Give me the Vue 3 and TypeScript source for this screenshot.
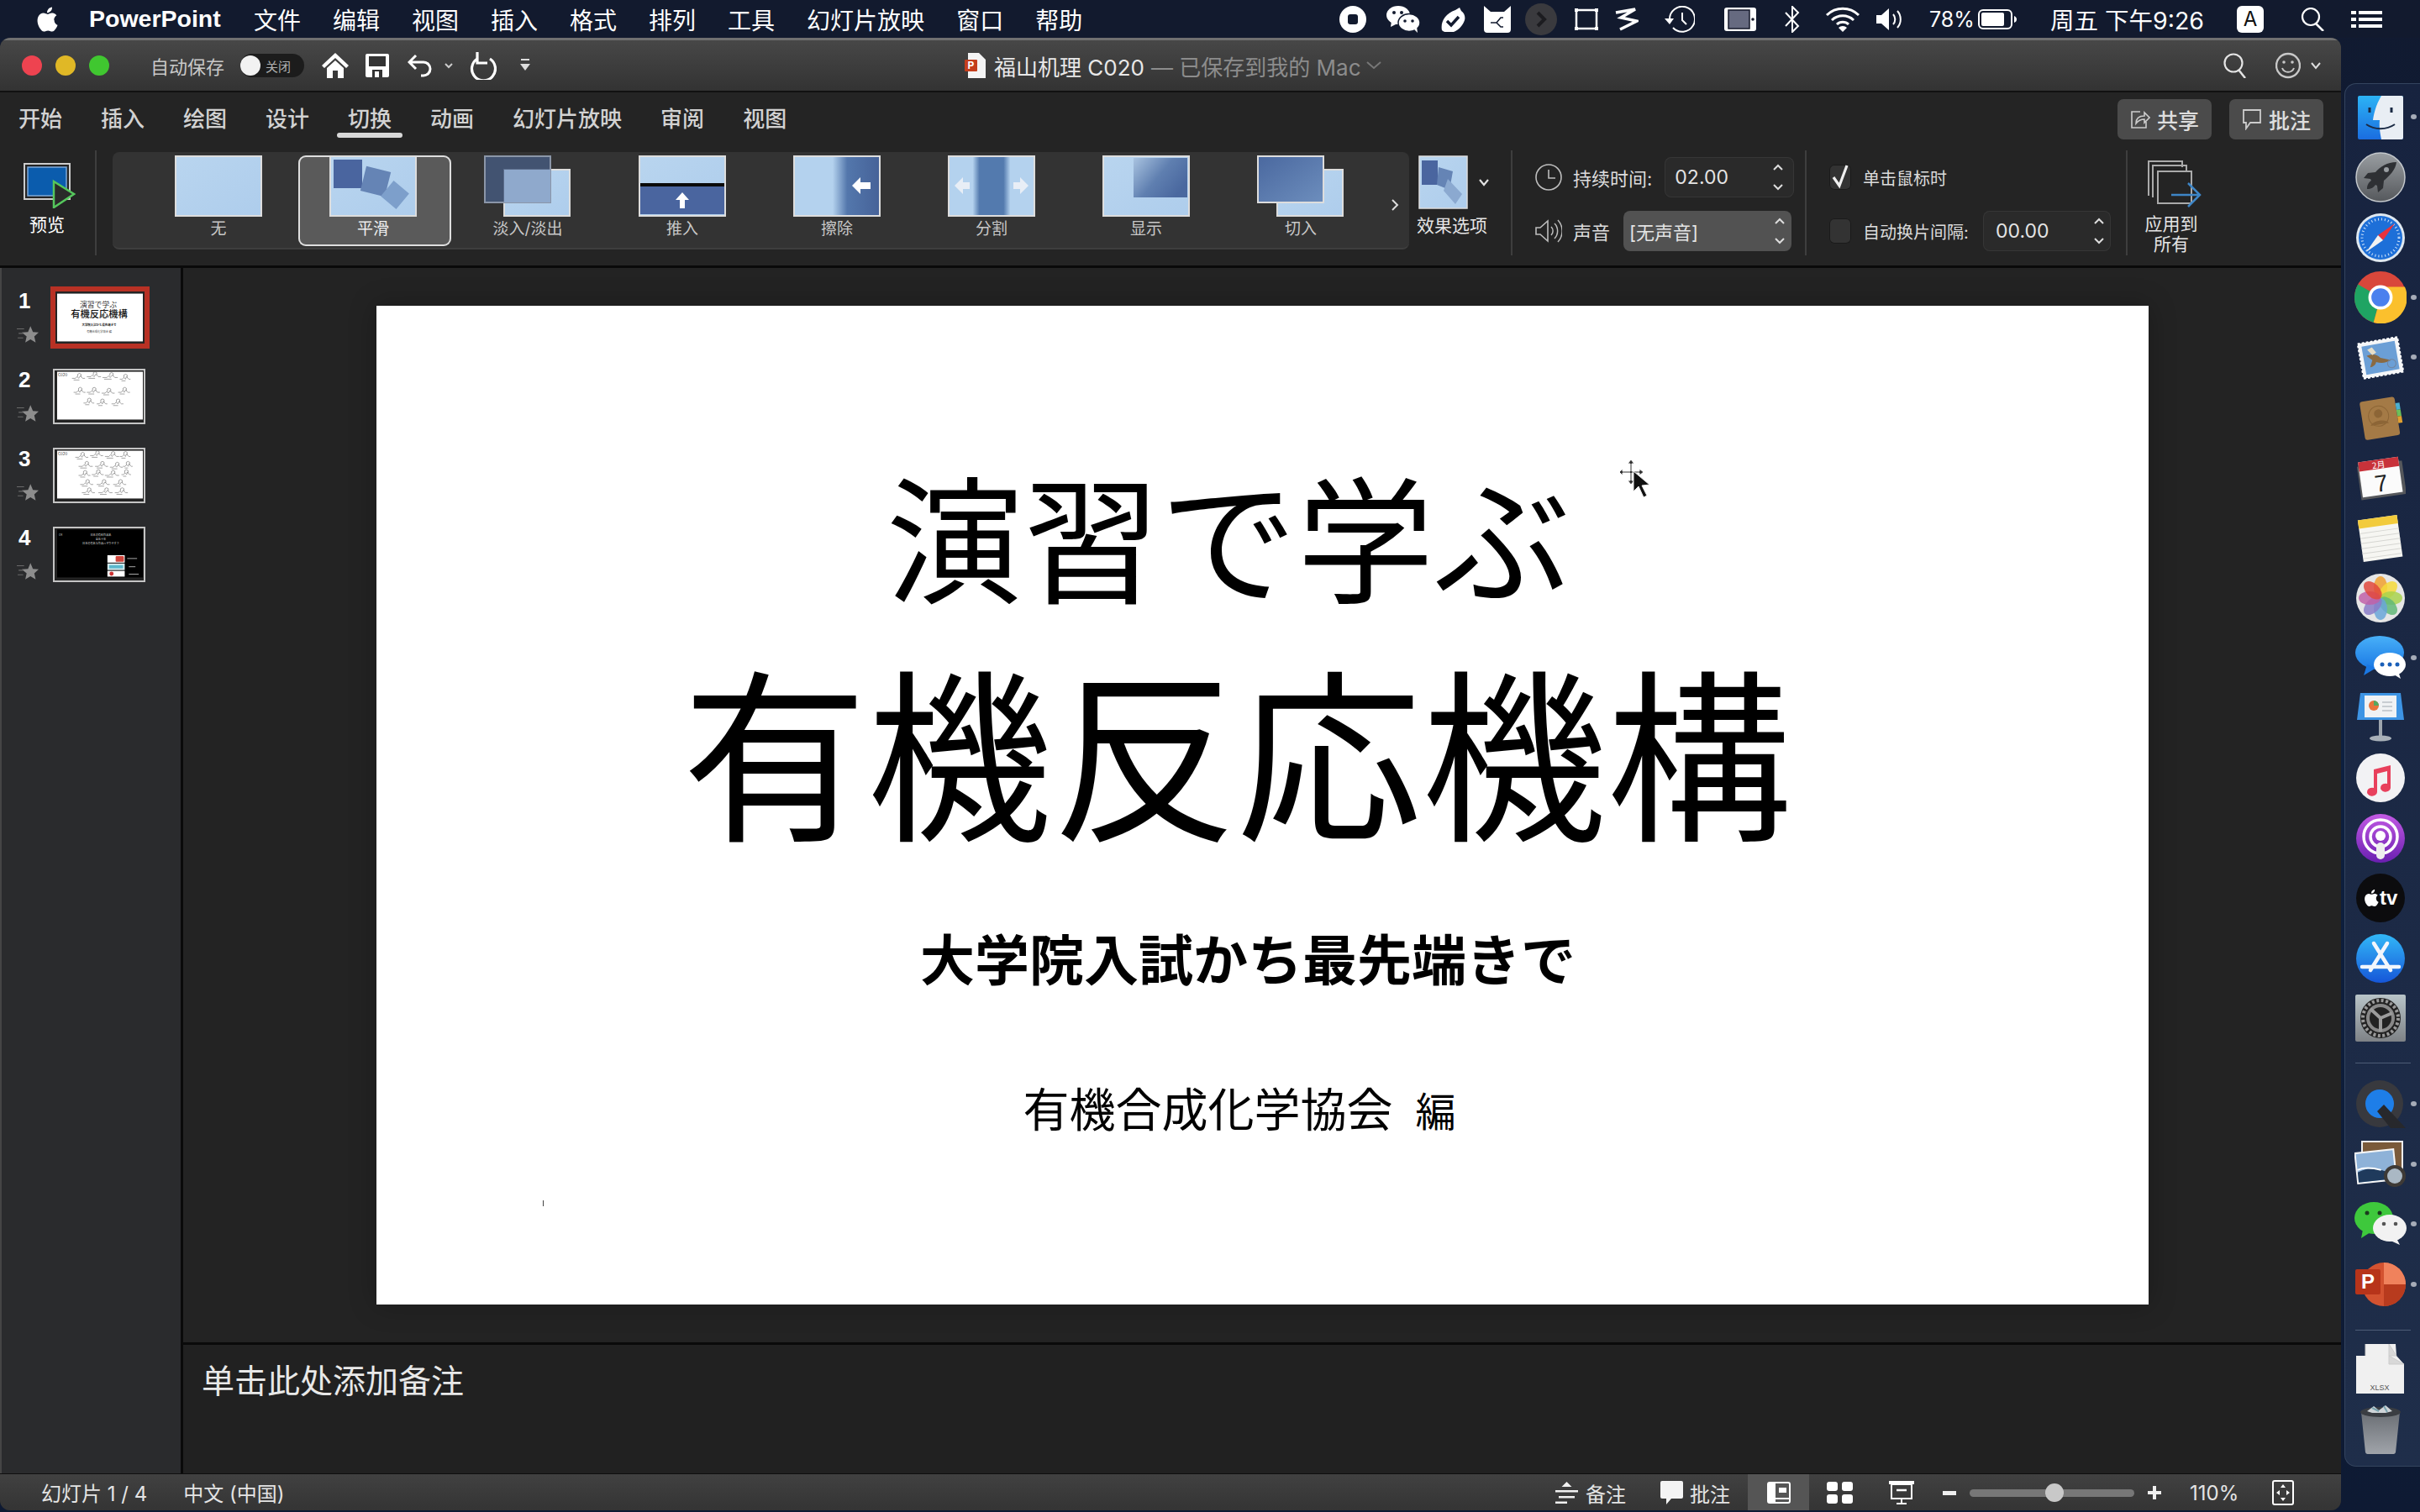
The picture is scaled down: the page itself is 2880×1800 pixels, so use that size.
<script setup lang="ts">
type Transition = { label: string; kind: string }

const menus = ['文件', '编辑', '视图', '插入', '格式', '排列', '工具', '幻灯片放映', '窗口', '帮助']
const tabs = ['开始', '插入', '绘图', '设计', '切换', '动画', '幻灯片放映', '审阅', '视图']

const transitions: Transition[] = [
  { label: '无', kind: 'none' },
  { label: '平滑', kind: 'morph' },
  { label: '淡入/淡出', kind: 'fade' },
  { label: '推入', kind: 'push' },
  { label: '擦除', kind: 'wipe' },
  { label: '分割', kind: 'split' },
  { label: '显示', kind: 'reveal' },
  { label: '切入', kind: 'cut' }
]

const slides = [1, 2, 3, 4]
const petals = ['#f0a030', '#f4d93a', '#a8d24e', '#62b878', '#6aa6d8', '#8a7cc8', '#c060a8', '#e0483c']

// little squiggles standing in for the chemistry drawings on the small slides
const scribble = (rows: number[][]) =>
  rows
    .map(([x, y, w]) => {
      const mid = x + w / 2
      return `M${x} ${y}h${w * 0.3}l2 -2l2 2L${mid + 3} ${y - 3}l3 3h${w * 0.2}M${mid} ${y - 2}v-3l2 -1l2 1v3M${x + 2} ${y + 2}h${w * 0.5}`
    })
    .join('')

const slide2 = scribble([
  [18, 8, 14], [36, 6, 16], [55, 7, 18], [76, 9, 10],
  [20, 25, 12], [36, 25, 14], [54, 26, 14], [74, 25, 12],
  [32, 38, 10], [48, 39, 10], [66, 39, 12]
])
const slide3 = scribble([
  [22, 8, 14], [40, 6, 14], [58, 7, 16], [76, 7, 10],
  [26, 19, 16], [46, 19, 14], [64, 20, 14], [80, 19, 8],
  [26, 30, 12], [42, 29, 12], [58, 30, 16], [78, 29, 8],
  [28, 41, 14], [48, 41, 14], [68, 41, 14],
  [30, 51, 14], [50, 51, 16], [70, 51, 14]
])
</script>

<template>
  <div class="screen">
    <header class="menubar">
      <div class="menu-left">
        <svg class="apple" width="30" height="32" viewBox="3 2 20 22"><path fill="#fff" d="M18.7 13.6c0-2.5 2-3.7 2.1-3.8-1.2-1.7-3-1.9-3.6-1.9-1.5-.2-3 .9-3.8.9-.8 0-2-.9-3.3-.9-1.7 0-3.3 1-4.1 2.5-1.8 3.1-.5 7.6 1.3 10.1.9 1.2 1.9 2.6 3.2 2.5 1.3-.1 1.8-.8 3.3-.8 1.5 0 2 .8 3.3.8 1.4 0 2.2-1.2 3.1-2.4 1-1.4 1.4-2.8 1.4-2.9-.1 0-2.7-1-2.7-4zM16.1 6.2c.7-.8 1.2-2 1-3.2-1 0-2.3.7-3 1.5-.6.7-1.2 1.9-1.1 3.1 1.2.1 2.4-.6 3.1-1.4z"/></svg>
        <span class="app-name">PowerPoint</span>
        <span v-for="m in menus" :key="m" class="menu-item">{{ m }}</span>
      </div>
      <div class="menu-status">
        <svg width="32" height="32" viewBox="0 0 32 32"><circle cx="16" cy="16" r="16" fill="#fff"/><rect x="10" y="10" width="12" height="12" rx="3" fill="#121a2e"/></svg>
        <svg width="40" height="32" viewBox="0 0 40 32"><ellipse cx="14" cy="11" rx="14" ry="11" fill="#fff"/><path d="M6 18l-1 7 8-4z" fill="#fff"/><circle cx="9" cy="8" r="2" fill="#121a2e"/><circle cx="18" cy="8" r="2" fill="#121a2e"/><ellipse cx="27" cy="20" rx="13" ry="10.5" fill="#fff" stroke="#121a2e" stroke-width="1.5"/><path d="M33 28l4 4-1-7z" fill="#fff"/><circle cx="22" cy="18" r="1.8" fill="#121a2e"/><circle cx="31" cy="18" r="1.8" fill="#121a2e"/></svg>
        <svg width="30" height="30" viewBox="0 0 30 30"><path d="M2 28C0 18 6 8 18 4l5-3 2 4c4 3 5 7 4 11-2 6-7 12-13 14-6 1-11 1-14-2z" fill="#fff"/><path d="M8 17l5 5 9-10" fill="none" stroke="#121a2e" stroke-width="3.5"/></svg>
        <svg width="32" height="32" viewBox="0 0 32 32"><path d="M0 0l8 7h16l8-7v28a4 4 0 0 1-4 4H4a4 4 0 0 1-4-4z" fill="#fff"/><path d="M8 20h7l5-6h3M15 20l5 5h3" fill="none" stroke="#121a2e" stroke-width="1.6"/></svg>
        <svg width="38" height="38" viewBox="0 0 38 38"><circle cx="19" cy="19" r="19" fill="#3a3a3e"/><path d="M15 11l8 8-8 8" fill="none" stroke="#1c1c20" stroke-width="4"/></svg>
        <svg width="28" height="26" viewBox="0 0 28 26"><rect x="2" y="2" width="24" height="22" fill="none" stroke="#fff" stroke-width="2.5"/><path d="M0 0h4v4H0zM24 0h4v4h-4zM0 22h4v4H0zM24 22h4v4h-4z" fill="#fff"/></svg>
        <svg width="28" height="28" viewBox="0 0 28 28"><path d="M1 6L24 2 7 12l19 4L6 26" fill="none" stroke="#fff" stroke-width="3.5"/></svg>
        <svg width="36" height="32" viewBox="0 0 36 32"><path d="M6 16a15 15 0 1 1 4 10" fill="none" stroke="#fff" stroke-width="2"/><path d="M0 15h11l-5 7z" fill="#fff"/><path d="M21 8v9l5 5" fill="none" stroke="#fff" stroke-width="2"/></svg>
        <svg width="38" height="28" viewBox="0 0 38 28"><rect width="38" height="28" rx="3" fill="#fff"/><rect x="5" y="3" width="25" height="22" fill="#666a80" stroke="#15192a" stroke-width="1.5"/><circle cx="34" cy="14" r="1.8" fill="#15192a"/></svg>
        <svg width="20" height="32" viewBox="0 0 20 32"><path d="M2 8l15 16-7 7V1l7 7L2 24" fill="none" stroke="#fff" stroke-width="2"/></svg>
        <svg width="42" height="30" viewBox="0 0 42 30"><path d="M2 10a27 27 0 0 1 38 0M8 16a19 19 0 0 1 26 0M14 21a10 10 0 0 1 14 0" fill="none" stroke="#fff" stroke-width="3"/><path d="M21 30l-5-5a7 7 0 0 1 10 0z" fill="#fff"/></svg>
        <svg width="34" height="26" viewBox="0 0 34 26"><path d="M0 8h6l9-8v26l-9-8H0z" fill="#fff"/><path d="M20 7a9 9 0 0 1 0 12M25 3a15 15 0 0 1 0 20" fill="none" stroke="#fff" stroke-width="2"/></svg>
        <span class="status-text battery-text">78%</span>
        <svg width="46" height="24" viewBox="0 0 46 24"><rect x="1" y="1" width="39" height="22" rx="5" fill="none" stroke="#fff" stroke-width="2"/><rect x="4" y="4" width="27" height="16" rx="2" fill="#fff"/><path d="M43 8c2 1 3 2 3 4s-1 3-3 4z" fill="#fff"/></svg>
        <span class="status-text clock">周五 下午9:26</span>
        <span class="input-badge">A</span>
        <svg width="30" height="28" viewBox="0 0 30 28"><circle cx="12" cy="11" r="10" fill="none" stroke="#fff" stroke-width="2.2"/><path d="M18 19l9 9" stroke="#fff" stroke-width="2.5"/></svg>
        <svg width="37" height="20" viewBox="0 0 37 20"><path d="M0 0h6v4H0zM9 0h28v4H9zM0 8h6v4H0zM9 8h28v4H9zM0 16h6v4H0zM9 16h28v4H9z" fill="#fff"/></svg>
      </div>
    </header>

    <div class="desk">
      <main class="window">
        <div class="titlebar">
          <div class="title-left">
            <i class="light red"></i><i class="light amber"></i><i class="light green"></i>
            <span class="autosave">自动保存</span>
            <span class="toggle"><b></b><em>关闭</em></span>
            <svg width="32" height="30" viewBox="0 0 32 30"><path d="M16 0L32 15l-3 3L16 6 3 18l-3-3z" fill="#fff"/><path d="M6 18L16 9l10 9v12h-7v-9h-6v9H6z" fill="#fff"/></svg>
            <svg width="28" height="28" viewBox="0 0 28 28"><path d="M2 0h24a2 2 0 0 1 2 2v24a2 2 0 0 1-2 2H2a2 2 0 0 1-2-2V2a2 2 0 0 1 2-2z" fill="#fff"/><rect x="4" y="3" width="20" height="12" fill="#333"/><rect x="8" y="19" width="12" height="9" fill="#333"/><rect x="11" y="21" width="5" height="7" fill="#fff"/></svg>
            <svg width="29" height="28" viewBox="0 0 29 28"><path d="M10 2L2 10l8 8M2 10h17a8 8 0 0 1 0 16h-3" fill="none" stroke="#fff" stroke-width="3"/></svg>
            <svg class="mini-caret" width="10" height="7" viewBox="0 0 10 7"><path d="M1 1l4 4 4-4" fill="none" stroke="#ccc" stroke-width="2"/></svg>
            <svg width="32" height="34" viewBox="0 0 32 34"><path d="M9 9a14 14 0 1 0 15 0" fill="none" stroke="#fff" stroke-width="3.2"/><path d="M9 1v13h12" fill="none" stroke="#fff" stroke-width="3.2"/></svg>
            <svg width="12" height="16" viewBox="0 0 12 16"><path d="M1 1h10" stroke="#ddd" stroke-width="2"/><path d="M0 6h12l-6 8z" fill="#ddd"/></svg>
          </div>
          <div class="doc-title">
            <svg width="26" height="30" viewBox="0 0 26 30"><path d="M4 0h13l8 8v22H4z" fill="#f4f4f4"/><rect y="8" width="15" height="14" rx="1" fill="#c43e1c"/><text x="7.5" y="19" class="doc-p">P</text></svg>
            <span class="doc-name">福山机理 C020</span>
            <span class="doc-state">— 已保存到我的 Mac</span>
            <svg width="18" height="10" viewBox="0 0 18 10"><path d="M1 1l8 7 8-7" fill="none" stroke="#777" stroke-width="2"/></svg>
          </div>
          <div class="title-right">
            <svg width="28" height="30" viewBox="0 0 28 30"><circle cx="12" cy="12" r="10.5" fill="none" stroke="#e4e4e4" stroke-width="2.2"/><path d="M18 20l8 10" stroke="#e4e4e4" stroke-width="2.5"/></svg>
            <svg width="30" height="32" viewBox="0 0 30 32"><circle cx="15" cy="16" r="14" fill="none" stroke="#c8c8c8" stroke-width="2.4"/><circle cx="10" cy="12" r="1.8" fill="#c8c8c8"/><circle cx="20" cy="12" r="1.8" fill="#c8c8c8"/><path d="M8 19a7.5 7.5 0 0 0 14 0" fill="none" stroke="#c8c8c8" stroke-width="2"/></svg>
            <svg width="12" height="9" viewBox="0 0 12 9"><path d="M1 1l5 6 5-6" fill="none" stroke="#ddd" stroke-width="2"/></svg>
          </div>
        </div>

        <section class="ribbon">
          <div class="tabs">
            <span v-for="t in tabs" :key="t" class="tab" :class="{ active: t === '切换' }">{{ t }}</span>
            <div class="tab-actions">
              <button class="pill">
                <svg width="24" height="24" viewBox="0 0 24 24"><path d="M12 3H2v19h17v-7" fill="none" stroke="#ccc" stroke-width="1.6"/><path d="M7 17c0-6 4-9 10-9V4l6 6-6 6v-4c-4 0-7 1-10 5z" fill="none" stroke="#ccc" stroke-width="1.6"/></svg>
                共享
              </button>
              <button class="pill">
                <svg width="24" height="26" viewBox="0 0 24 26"><path d="M2 2h20v15H10l-5 7v-7H2z" fill="none" stroke="#ccc" stroke-width="1.8"/></svg>
                批注
              </button>
            </div>
          </div>

          <div class="tools">
            <div class="preview">
              <svg width="62" height="54" viewBox="0 0 62 54">
                <rect x="1" y="1" width="54" height="42" fill="none" stroke="#ccc" stroke-width="2"/>
                <rect x="5" y="5" width="46" height="34" fill="#0b5cad" stroke="#7ea8d8" stroke-width="1.5"/>
                <path d="M36 22l24 15-24 16z" fill="#2a2a2a" stroke="#55c65c" stroke-width="2.5"/>
              </svg>
              <span>预览</span>
            </div>
            <i class="vsep"></i>

            <div class="gallery">
              <svg class="defs" width="0" height="0">
                <defs>
                  <linearGradient id="light" x1="0" y1="0" x2="1" y2="1"><stop offset="0" stop-color="#b9d5ef"/><stop offset="1" stop-color="#aecdec"/></linearGradient>
                  <linearGradient id="dark" x1="0" y1="0" x2="1" y2="1"><stop offset="0" stop-color="#4a689f"/><stop offset="1" stop-color="#6d8ebd"/></linearGradient>
                  <linearGradient id="wipe" x1="0" y1="0" x2="1" y2="0"><stop offset="0.45" stop-color="#b4d2ee"/><stop offset="0.62" stop-color="#5377ac"/><stop offset="1" stop-color="#466298"/></linearGradient>
                  <linearGradient id="band" x1="0" y1="0" x2="1" y2="0"><stop offset="0.28" stop-color="#b4d2ee"/><stop offset="0.36" stop-color="#537aae"/><stop offset="0.64" stop-color="#537aae"/><stop offset="0.72" stop-color="#b4d2ee"/></linearGradient>
                  <linearGradient id="reveal" x1="0" y1="0" x2="1" y2="0.6"><stop offset="0" stop-color="#a9c3e0"/><stop offset="0.55" stop-color="#5f7fb0"/><stop offset="1" stop-color="#4a689f"/></linearGradient>
                </defs>
              </svg>
              <div class="cells">
                <div v-for="t in transitions" :key="t.kind" class="cell" :class="{ selected: t.kind === 'morph' }">
                  <svg class="thumb" width="104" height="73" viewBox="0 0 104 73">
                    <template v-if="t.kind === 'fade'">
                      <rect x="24" y="17" width="78" height="55" fill="url(#light)" stroke="#ddd" stroke-width="2"/>
                      <rect x="1" y="1" width="78" height="55" fill="#45597c" fill-opacity=".85" stroke="#8b96a8" stroke-width="2"/>
                      <rect x="24" y="17" width="55" height="39" fill="#8fa9cc"/>
                    </template>
                    <template v-else-if="t.kind === 'cut'">
                      <rect x="24" y="17" width="78" height="55" fill="url(#light)" stroke="#ddd" stroke-width="2"/>
                      <rect x="1" y="1" width="78" height="55" fill="url(#dark)" stroke="#ddd" stroke-width="2"/>
                    </template>
                    <template v-else>
                      <rect x="1" y="1" width="102" height="71" :fill="t.kind === 'wipe' ? 'url(#wipe)' : t.kind === 'split' ? 'url(#band)' : 'url(#light)'" stroke="#ddd" stroke-width="2"/>
                    </template>
                    <template v-if="t.kind === 'morph'">
                      <rect x="5" y="5" width="34" height="34" fill="#4a659f"/>
                      <rect x="40" y="16" width="30" height="30" fill="#6584b5" transform="rotate(14 55 31)"/>
                      <rect x="66" y="35" width="24" height="24" fill="#7d9fcb" transform="rotate(40 78 47)"/>
                    </template>
                    <template v-if="t.kind === 'push'">
                      <rect x="2" y="36" width="100" height="34" fill="#4a659f"/>
                      <rect x="2" y="33" width="100" height="4" fill="#0a0a0a"/>
                      <path d="M52 44l8 9h-5v10h-6V53h-5z" fill="#fff"/>
                    </template>
                    <path v-if="t.kind === 'wipe'" d="M70 36l10-10v6h12v8H80v6z" fill="#fff"/>
                    <template v-if="t.kind === 'split'">
                      <path d="M8 36l10-10v6h8v8h-8v6z" fill="#e8eef6"/>
                      <path d="M96 36L86 26v6h-8v8h8v6z" fill="#e8eef6"/>
                    </template>
                    <rect v-if="t.kind === 'reveal'" x="37" y="3" width="64" height="47" fill="url(#reveal)"/>
                  </svg>
                  <span class="cell-label">{{ t.label }}</span>
                </div>
              </div>
              <svg class="more" width="9" height="14" viewBox="0 0 9 14"><path d="M1 1l6 6-6 6" fill="none" stroke="#ddd" stroke-width="2"/></svg>
            </div>

            <div class="effects">
              <div class="effects-top">
                <svg width="59" height="64" viewBox="0 0 59 64">
                  <rect x="1" y="1" width="57" height="62" fill="url(#light)" stroke="#ddd" stroke-width="1.5"/>
                  <rect x="4" y="6" width="19" height="29" fill="#4a659f"/>
                  <path d="M24 14l17 5-4 22-15-6z" fill="#6584b5"/>
                  <path d="M35 28l17 18-8 12-14-16z" fill="#8ba9d0"/>
                </svg>
                <svg width="12" height="9" viewBox="0 0 12 9"><path d="M1 1l5 6 5-6" fill="none" stroke="#e0e0e0" stroke-width="2.2"/></svg>
              </div>
              <span>效果选项</span>
            </div>
            <i class="vsep"></i>

            <div class="timing">
              <div class="form-row">
                <svg width="32" height="32" viewBox="0 0 32 32"><circle cx="16" cy="16" r="15" fill="none" stroke="#bdbdbd" stroke-width="1.6"/><path d="M16 7v10h8" fill="none" stroke="#bdbdbd" stroke-width="1.6"/></svg>
                <span class="form-label">持续时间:</span>
                <div class="spin duration"><span>02.00</span>
                  <svg width="14" height="34" viewBox="0 0 14 34"><path d="M2 8l5-5 5 5M2 26l5 5 5-5" fill="none" stroke="#ddd" stroke-width="2"/></svg>
                </div>
              </div>
              <div class="form-row">
                <svg width="32" height="30" viewBox="0 0 32 30"><path d="M1 11h5l9-8v24l-9-8H1z" fill="none" stroke="#bdbdbd" stroke-width="1.6"/><path d="M19 10a7 7 0 0 1 0 10M23 6a13 13 0 0 1 0 18M27 2a19 19 0 0 1 0 26" fill="none" stroke="#bdbdbd" stroke-width="1.5"/></svg>
                <span class="form-label">声音</span>
                <div class="spin sound"><span>[无声音]</span>
                  <svg width="14" height="34" viewBox="0 0 14 34"><path d="M2 8l5-5 5 5M2 26l5 5 5-5" fill="none" stroke="#ddd" stroke-width="2"/></svg>
                </div>
              </div>
            </div>
            <i class="vsep"></i>

            <div class="advance">
              <div class="form-row">
                <span class="check">
                  <svg width="26" height="30" viewBox="0 0 26 30"><path d="M5 15l7 10 9-24" fill="none" stroke="#f0f0f0" stroke-width="3.2"/></svg>
                </span>
                <span class="check-label">单击鼠标时</span>
              </div>
              <div class="form-row">
                <span class="check"></span>
                <span class="check-label wide">自动换片间隔:</span>
                <div class="spin auto"><span>00.00</span>
                  <svg width="14" height="34" viewBox="0 0 14 34"><path d="M2 8l5-5 5 5M2 26l5 5 5-5" fill="none" stroke="#ddd" stroke-width="2"/></svg>
                </div>
              </div>
            </div>
            <i class="vsep"></i>

            <div class="apply">
              <svg width="64" height="56" viewBox="0 0 64 56">
                <path d="M1 42V1h40v7" fill="none" stroke="#aaa" stroke-width="2"/>
                <path d="M6 44V6h40v6" fill="none" stroke="#aaa" stroke-width="2"/>
                <rect x="12" y="13" width="40" height="38" fill="#242424" stroke="#aaa" stroke-width="2"/>
                <path d="M28 41h32M48 27l14 14-14 14" fill="none" stroke="#3d85c6" stroke-width="2.5"/>
              </svg>
              <span>应用到<br />所有</span>
            </div>
          </div>
        </section>

        <div class="body">
          <aside class="pane">
            <div v-for="n in slides" :key="n" class="pane-row">
              <div class="pane-num">
                <b>{{ n }}</b>
                <svg width="26" height="22" viewBox="0 0 24 20"><path d="M15 0l2.700 6.500 6.300.5-4.800 4.300 1.500 6.700-5.700-3.500-5.700 3.500 1.500-6.700L5.500 7l6.800-.5z" fill="#8d8d8d"/><path d="M0 3h8M2 8h5M1 13h6" stroke="#6a6a6a" stroke-width="1"/></svg>
              </div>
              <div class="mini" :class="{ current: n === 1 }">
                <svg v-if="n === 1" class="mini-slide" viewBox="0 0 104 58">
                  <rect width="104" height="58" fill="#fff"/>
                  <text x="50" y="17" class="m1">演習で学ぶ</text>
                  <text x="51" y="29" class="m2">有機反応機構</text>
                  <text x="51" y="39" class="m3">大学院入試かち最先端きで</text>
                  <text x="51" y="47" class="m4">有機合成化学協会 編</text>
                </svg>
                <svg v-else-if="n === 4" class="mini-slide" viewBox="0 0 104 58">
                  <rect width="104" height="58" fill="#000"/>
                  <text x="2" y="8" class="m5">CM</text>
                  <text x="53" y="8" class="m6">日本の有料作品名</text>
                  <text x="53" y="13" class="m6">全五十年</text>
                  <text x="53" y="18" class="m6">日本の有名な作品ハマりやすさ</text>
                  <rect x="61" y="31" width="21" height="9" fill="#fff"/><rect x="71" y="32" width="10" height="7" rx="1" fill="#d0453c"/>
                  <rect x="61" y="41" width="21" height="8" fill="#d8eef0"/><rect x="63" y="43" width="17" height="4" fill="#5bb8cc"/>
                  <rect x="61" y="50" width="21" height="7" fill="#fff"/><circle cx="66" cy="53.5" r="2.5" fill="#c33"/>
                  <path d="M85 35h12M87 45h8M87 54h12" stroke="#aaa" stroke-width="1"/>
                </svg>
                <svg v-else class="mini-slide" viewBox="0 0 104 58">
                  <rect width="104" height="58" fill="#fff"/>
                  <text x="1" y="6" class="m7">C020</text>
                  <path :d="n === 2 ? slide2 : slide3" fill="none" stroke="#666" stroke-width=".6"/>
                </svg>
              </div>
            </div>
          </aside>

          <div class="editor">
            <div class="canvas">
              <article class="slide">
                <h2 class="line-a">演習で学ぶ</h2>
                <h1 class="line-b">有機反応機構</h1>
                <p class="line-c">大学院入試かち最先端きで</p>
                <p class="line-d">有機合成化学協会<small>編</small></p>
                <i class="tick"></i>
                <svg class="cursor" width="38" height="46" viewBox="0 0 38 46">
                  <path d="M14 0l4 5h-3v9h9v-3l5 4-5 4v-3h-9v9h3l-4 5-4-5h3v-9H4v3l-4-4 4-4v3h9V5h-3z" fill="#333" stroke="#fff" stroke-width="1"/>
                  <path d="M17 14l0 24 6-6 6 13 4-2-6-12 9-1z" fill="#111" stroke="#eee" stroke-width="1"/>
                </svg>
              </article>
            </div>
            <div class="notes">单击此处添加备注</div>
          </div>
        </div>

        <footer class="statusbar">
          <span class="slide-count">幻灯片 1 / 4</span>
          <span class="lang">中文 (中国)</span>
          <div class="status-tools">
            <svg width="27" height="26" viewBox="0 0 27 26"><path d="M13.5 0l6 6h-12zM0 10h27v2.5H0zM4 17h19v2.5H4zM0 23.5h14V26H0z" fill="#f0f0f0"/></svg>
            <span>备注</span>
            <svg width="27" height="28" viewBox="0 0 27 28"><path d="M2 0h23a2 2 0 0 1 2 2v17a2 2 0 0 1-2 2H13l-6 7v-7H2a2 2 0 0 1-2-2V2a2 2 0 0 1 2-2z" fill="#f4f4f4"/></svg>
            <span>批注</span>
            <span class="view-btn active"><svg width="28" height="26" viewBox="0 0 28 26"><rect x="1" y="1" width="26" height="24" rx="2" fill="none" stroke="#fff" stroke-width="2"/><rect x="1" y="1" width="9" height="24" fill="#fff"/><rect x="1" y="19" width="26" height="2" fill="#fff"/><rect x="14" y="7" width="9" height="6" fill="#fff"/></svg></span>
            <span class="view-btn"><svg width="31" height="26" viewBox="0 0 31 26"><rect width="13" height="11" rx="3" fill="#fff"/><rect x="18" width="13" height="11" rx="3" fill="#fff"/><rect y="15" width="13" height="11" rx="3" fill="#fff"/><rect x="18" y="15" width="13" height="11" rx="3" fill="#fff"/></svg></span>
            <span class="view-btn"><svg width="30" height="28" viewBox="0 0 30 28"><rect width="30" height="4" fill="#fff"/><rect x="3" y="4" width="24" height="17" fill="none" stroke="#fff" stroke-width="2"/><path d="M9 11h12" stroke="#fff" stroke-width="2.5"/><path d="M15 21v6M9 27h12" stroke="#fff" stroke-width="2"/></svg></span>
            <i class="zoom-minus"></i>
            <div class="slider"><i></i></div>
            <svg width="16" height="16" viewBox="0 0 16 16"><path d="M6 0h4v6h6v4h-6v6H6v-6H0V6h6z" fill="#f0f0f0"/></svg>
            <span>110%</span>
            <svg width="26" height="30" viewBox="0 0 26 30"><rect x="1" y="1" width="24" height="28" rx="2" fill="none" stroke="#fff" stroke-width="2"/><path d="M13 5l3 4h-6zM13 25l3-4h-6zM5 15l4-3v6zM21 15l-4-3v6z" fill="#fff"/></svg>
          </div>
        </footer>
      </main>

      <nav class="dock">
        <div class="dock-item running">
          <svg width="60" height="60" viewBox="0 0 60 60"><defs><linearGradient id="fb" x1="0" y1="0" x2="0" y2="1"><stop offset="0" stop-color="#2cb3f5"/><stop offset="1" stop-color="#1a6de0"/></linearGradient></defs><rect x="3" y="4" width="54" height="52" rx="2" fill="url(#fb)"/><path d="M31 4c-7 12-9 22-10 29h8c-1 9 1 17 2 23h24a2 2 0 0 0 2-2V6a2 2 0 0 0-2-2z" fill="#e9eef4"/><path d="M17 18v6M43 18v6" stroke="#1a2a44" stroke-width="3"/><path d="M13 38c10 7 24 7 34 0" fill="none" stroke="#1a2a44" stroke-width="2"/></svg>
        </div>
        <div class="dock-item">
          <svg width="60" height="60" viewBox="0 0 60 60"><defs><linearGradient id="lp" x1="0" y1="0" x2="0" y2="1"><stop offset="0" stop-color="#9a9ea2"/><stop offset="1" stop-color="#55585c"/></linearGradient></defs><circle cx="30" cy="30" r="29" fill="url(#lp)" stroke="#c4c8cc" stroke-width="1.5"/><path d="M49 12c-11 0-19 5-25 12l-9 1-5 6 8 1 1 2c-3 2-5 5-5 10 5 0 8-2 10-5l2 1 1 8 6-5 1-9c7-6 14-13 15-22z" fill="#2e3034"/><circle cx="37" cy="21" r="3" fill="#9a9ea2"/></svg>
        </div>
        <div class="dock-item">
          <svg width="60" height="60" viewBox="0 0 60 60"><circle cx="30" cy="30" r="29" fill="#dfe8f0"/><circle cx="30" cy="30" r="26" fill="#1d6fd8"/><circle cx="30" cy="30" r="22" fill="none" stroke="#d4e6fa" stroke-width="3" stroke-dasharray="1 3"/><path d="M47 13L27 27l6 6z" fill="#e8323c"/><path d="M13 47l14-20 6 6z" fill="#f2f2f2"/></svg>
        </div>
        <div class="dock-item running">
          <svg width="62" height="62" viewBox="0 0 60 60"><circle cx="30" cy="30" r="30" fill="#d9473b"/><path d="M30 30L4 15a30 30 0 0 0 18 44z" fill="#1fa463"/><path d="M30 18h28a30 30 0 0 1-36 41l8-29z" fill="#fbc02d"/><circle cx="30" cy="30" r="14" fill="#fff"/><circle cx="30" cy="30" r="10.5" fill="#4a80ee"/></svg>
        </div>
        <div class="dock-item running">
          <svg width="60" height="60" viewBox="0 0 60 60"><g transform="rotate(-10 30 30)"><rect x="6" y="9" width="48" height="42" fill="#f4f6f8" stroke="#fff" stroke-width="2" stroke-dasharray="3 2"/><rect x="10" y="13" width="40" height="34" fill="#6b9fd6"/><path d="M14 25c8-2 12 0 16 5l12 5c-6 2-12 2-18-1-1 3-4 5-8 5l4-8z" fill="#8a6a42"/><path d="M16 18l5 7 5-2-4-7z" fill="#e6ddc8"/><circle cx="42" cy="39" r="5" fill="none" stroke="#7286a0"/></g></svg>
        </div>
        <div class="dock-item">
          <svg width="60" height="60" viewBox="0 0 60 60"><g transform="rotate(-9 30 30)"><rect x="8" y="8" width="42" height="46" rx="3" fill="#a47a46"/><rect x="50" y="16" width="5" height="8" fill="#4bb0d0"/><rect x="50" y="24" width="5" height="8" fill="#6dbf5a"/><rect x="50" y="32" width="5" height="8" fill="#e0a030"/><circle cx="28" cy="28" r="12" fill="none" stroke="#8c6536"/><circle cx="28" cy="25" r="5" fill="#8c6536"/><path d="M17 38c3-6 19-6 22 0z" fill="#8c6536"/></g></svg>
        </div>
        <div class="dock-item">
          <svg width="60" height="60" viewBox="0 0 60 60"><g transform="rotate(-8 30 30)"><rect x="4" y="13" width="54" height="40" fill="#56585c"/><rect x="6" y="8" width="48" height="42" fill="#fbfbfb"/><rect x="6" y="8" width="48" height="11" fill="#c8323a"/><text x="30" y="18" class="cal-m">2月</text><text x="30" y="46" class="cal-d">7</text></g></svg>
        </div>
        <div class="dock-item">
          <svg width="60" height="60" viewBox="0 0 60 60"><g transform="rotate(-8 30 30)"><rect x="6" y="6" width="47" height="50" fill="#f6f6f2"/><rect x="6" y="6" width="47" height="10" fill="#f2cb3c"/><path d="M6 22h47M6 28h47M6 34h47M6 40h47M6 46h47M6 52h47" stroke="#d6d6d2" stroke-width="1"/></g></svg>
        </div>
        <div class="dock-item">
          <svg width="60" height="60" viewBox="0 0 60 60"><circle cx="30" cy="30" r="29" fill="#e6e6e6"/><g v-for="(c, i) in petals" :key="c" :transform="`rotate(${i * 45} 30 30)`"><ellipse cx="30" cy="17" rx="8" ry="13" :fill="c" fill-opacity=".85"/></g></svg>
        </div>
        <div class="dock-item running">
          <svg width="60" height="60" viewBox="0 0 60 60"><defs><linearGradient id="ms" x1="0" y1="0" x2="0" y2="1"><stop offset="0" stop-color="#48b0f8"/><stop offset="1" stop-color="#1a78e4"/></linearGradient></defs><ellipse cx="29" cy="24" rx="29" ry="20" fill="url(#ms)"/><path d="M14 38l-4 13 15-9z" fill="#1a78e4"/><ellipse cx="41" cy="38" rx="19" ry="14" fill="#fff"/><path d="M46 50l8 5-3-9z" fill="#fff"/><circle cx="32" cy="38" r="2.5" fill="#1a5fb8"/><circle cx="41" cy="38" r="2.5" fill="#1a5fb8"/><circle cx="50" cy="38" r="2.5" fill="#1a5fb8"/></svg>
        </div>
        <div class="dock-item">
          <svg width="60" height="60" viewBox="0 0 60 60"><path d="M6 0h48l4 32H2z" fill="#3d94e4"/><rect x="11" y="3" width="38" height="26" fill="#f0f2f4"/><circle cx="22" cy="15" r="6" fill="#e8743c"/><path d="M22 15V9a6 6 0 0 1 6 6z" fill="#55a860"/><path d="M32 11h12M32 16h12M32 21h12" stroke="#a0a8b0"/><rect x="28" y="32" width="4" height="20" fill="#9ea6ae"/><ellipse cx="30" cy="54" rx="13" ry="3.5" fill="#a8b0b8"/></svg>
        </div>
        <div class="dock-item">
          <svg width="60" height="60" viewBox="0 0 60 60"><circle cx="30" cy="30" r="29" fill="#f2f2f4"/><path d="M22 20l20-5v27a6 5 0 1 1-4-5V22l-12 3v22a6 5 0 1 1-4-5z" fill="#e8405c"/></svg>
        </div>
        <div class="dock-item">
          <svg width="60" height="60" viewBox="0 0 60 60"><defs><linearGradient id="pc" x1="0" y1="0" x2="0" y2="1"><stop offset="0" stop-color="#c25ae4"/><stop offset="1" stop-color="#6a1fb0"/></linearGradient></defs><circle cx="30" cy="30" r="29" fill="url(#pc)"/><circle cx="30" cy="28" r="20" fill="none" stroke="#fff" stroke-width="3.5"/><circle cx="30" cy="28" r="12" fill="none" stroke="#fff" stroke-width="3.5"/><circle cx="30" cy="27" r="6" fill="#fff"/><rect x="25" y="35" width="10" height="20" rx="5" fill="#eee"/></svg>
        </div>
        <div class="dock-item">
          <svg width="60" height="60" viewBox="0 0 60 60"><circle cx="30" cy="30" r="29" fill="#0c0c0e"/><svg x="9" y="19" width="20" height="22" viewBox="3 2 20 22"><path fill="#fff" d="M18.7 13.6c0-2.5 2-3.7 2.1-3.8-1.2-1.7-3-1.9-3.6-1.9-1.5-.2-3 .9-3.8.9-.8 0-2-.9-3.3-.9-1.7 0-3.3 1-4.1 2.5-1.8 3.1-.5 7.6 1.3 10.1.9 1.2 1.9 2.6 3.2 2.5 1.3-.1 1.8-.8 3.3-.8 1.5 0 2 .8 3.3.8 1.4 0 2.2-1.2 3.1-2.4 1-1.4 1.4-2.8 1.4-2.9-.1 0-2.7-1-2.7-4zM16.1 6.2c.7-.8 1.2-2 1-3.2-1 0-2.3.7-3 1.5-.6.7-1.2 1.9-1.1 3.1 1.2.1 2.4-.6 3.1-1.4z"/></svg><text x="29" y="38" class="tv">tv</text></svg>
        </div>
        <div class="dock-item">
          <svg width="60" height="60" viewBox="0 0 60 60"><defs><linearGradient id="as" x1="0" y1="0" x2="0" y2="1"><stop offset="0" stop-color="#32b8f8"/><stop offset="1" stop-color="#1656d8"/></linearGradient></defs><circle cx="30" cy="30" r="29" fill="url(#as)"/><path d="M38 12L18 44M22 12l20 32M8 40h44" fill="none" stroke="#f2f6fc" stroke-width="4.5" stroke-linecap="round"/></svg>
        </div>
        <div class="dock-item">
          <svg width="60" height="60" viewBox="0 0 60 60"><defs><linearGradient id="sp" x1="0" y1="0" x2="0" y2="1"><stop offset="0" stop-color="#b8c4c8"/><stop offset="1" stop-color="#7e8286"/></linearGradient></defs><rect y="2" width="60" height="56" rx="2" fill="url(#sp)"/><circle cx="30" cy="30" r="24" fill="#222"/><circle cx="30" cy="30" r="21" fill="none" stroke="#9a9a9a" stroke-width="4" stroke-dasharray="3 2.5"/><circle cx="30" cy="30" r="15" fill="none" stroke="#888" stroke-width="4"/><path d="M30 30L18 19M30 30l14-6M30 30v16" stroke="#9c9c9c" stroke-width="4"/></svg>
        </div>
        <i class="dock-sep sep-a"></i>
        <div class="dock-item running">
          <svg width="60" height="60" viewBox="0 0 60 60"><circle cx="29" cy="29" r="28" fill="#38393e"/><circle cx="29" cy="29" r="17" fill="#1e7ee8"/><path d="M34 30l26 28H42L26 38z" fill="#27282c"/></svg>
        </div>
        <div class="dock-item running">
          <svg width="62" height="60" viewBox="0 0 62 60"><rect x="8" y="2" width="50" height="44" fill="#eee"/><rect x="10" y="4" width="46" height="40" fill="#7a5a3a"/><g transform="rotate(-6 30 30)"><rect x="1" y="13" width="48" height="38" fill="#f6f6f6"/><rect x="3" y="15" width="44" height="34" fill="#8eb2d8"/><path d="M3 37c10-4 20-4 28 0s12 4 16 2v10H3z" fill="#1f3a5c"/><path d="M3 34c10-3 20 0 28 3" stroke="#fff" stroke-width="2" fill="none"/></g><circle cx="48" cy="44" r="13" fill="#3e3a36"/><circle cx="48" cy="44" r="9" fill="#aab8c4"/></svg>
        </div>
        <div class="dock-item running">
          <svg width="62" height="60" viewBox="0 0 62 60"><ellipse cx="23" cy="22" rx="23" ry="19" fill="#3ec83c"/><path d="M10 36l-2 10 11-7z" fill="#3ec83c"/><circle cx="15" cy="16" r="2.5" fill="#1b3b1e"/><circle cx="30" cy="16" r="2.5" fill="#1b3b1e"/><ellipse cx="42" cy="34" rx="20" ry="16" fill="#f2f2f2"/><path d="M50 46l4 8-11-5z" fill="#f2f2f2"/><circle cx="35" cy="29" r="2.3" fill="#555"/><circle cx="49" cy="29" r="2.3" fill="#555"/></svg>
        </div>
        <div class="dock-item running">
          <svg width="60" height="60" viewBox="0 0 60 60"><circle cx="34" cy="30" r="26" fill="#d35230"/><path d="M34 30V4a26 26 0 0 1 26 26z" fill="#f0825c"/><path d="M34 30h26a26 26 0 0 1-26 26z" fill="#b83b1e"/><rect y="12" width="30" height="30" rx="2" fill="#b7341a"/><text x="15" y="35" class="ppt">P</text></svg>
        </div>
        <i class="dock-sep sep-b"></i>
        <div class="dock-item">
          <svg width="60" height="60" viewBox="0 0 60 60"><path d="M12 0h36l1 14 9 10v35H1V14h11z" fill="#f0f0f0"/><path d="M12 14V0M40 0l9 14h-9zM40 14l18 10H40z" fill="#d8d8d8" stroke="#ccc"/><text x="29" y="55" class="xlsx">XLSX</text></svg>
        </div>
        <div class="dock-item">
          <svg width="60" height="60" viewBox="0 0 60 60"><defs><linearGradient id="tr" x1="0" y1="0" x2="0" y2="1"><stop offset="0" stop-color="#6a6e74"/><stop offset="1" stop-color="#a0a4aa"/></linearGradient></defs><path d="M7 10h46l-5 48a3 3 0 0 1-3 2H15a3 3 0 0 1-3-2z" fill="url(#tr)"/><ellipse cx="30" cy="10" rx="24" ry="6" fill="#3a3d42"/><path d="M14 9l8-6 6 5 8-6 8 7-8 2H20z" fill="#cfd4d8"/><path d="M20 5l8 4M34 3l4 7" stroke="#7aa4b0" stroke-width="2"/></svg>
        </div>
      </nav>
    </div>
  </div>
</template>

<style>
html,
body {
  margin: 0;
  background: #0e1a33;
}
</style>

<style scoped>
.screen {
  width: 2880px;
  height: 1800px;
  overflow: hidden;
  display: flex;
  flex-direction: column;
  background: linear-gradient(180deg, #111a30 0%, #0d2040 50%, #0e1a33 100%);
  font-family: Inter, "Noto Sans CJK SC", sans-serif;
  color: #fff;
}

i {
  display: block;
  font-style: normal;
}

.menubar {
  height: 45px;
  flex: none;
  display: flex;
  align-items: center;
  background: #121a2e;
  font-size: 28px;
}

.menu-left {
  display: flex;
  align-items: center;
  gap: 38px;
  padding-left: 41px;
}

.apple {
  margin-right: -3px;
}

.app-name {
  font-family: "Liberation Sans", sans-serif;
  font-weight: 700;
  font-size: 28.5px;
  width: 157px;
  margin-right: 1px;
  white-space: nowrap;
}

.menu-status {
  margin-left: auto;
  display: grid;
  grid-template-columns: 56px 64px 52px 49px 59px 48px 59px 71px 71px 49px 61px 63px 58px 86px 222px 76px 60px 37px;
  justify-items: start;
  align-items: center;
  padding-right: 45px;
}

.status-text {
  font-size: 26px;
  white-space: nowrap;
}

.battery-text {
  font-size: 25px;
}

.clock {
  font-size: 28.5px;
}

.input-badge {
  width: 32px;
  height: 32px;
  border-radius: 6px;
  background: #fff;
  color: #111;
  font-size: 24px;
  line-height: 32px;
  text-align: center;
}

.desk {
  flex: 1;
  display: flex;
  min-height: 0;
}

.window {
  width: 2786px;
  height: 1753px;
  flex: none;
  display: flex;
  flex-direction: column;
  border-radius: 12px;
  overflow: hidden;
  background: #242424;
}

.titlebar {
  height: 65px;
  flex: none;
  box-sizing: border-box;
  display: flex;
  align-items: center;
  border-top: 3px solid #707070;
  border-bottom: 2px solid #111;
  background: linear-gradient(180deg, #474747, #333);
}

.title-left {
  width: 1148px;
  display: grid;
  grid-template-columns: 40px 40px 73px 107px 97px 52px 50px 44px 30px 60px 12px;
  justify-items: start;
  align-items: center;
  padding-left: 26px;
  box-sizing: border-box;
  flex: none;
}

.light {
  width: 24px;
  height: 24px;
  border-radius: 50%;
}

.red { background: #ee4350; }
.amber { background: #e0b826; }
.green { background: #40c730; }

.autosave {
  font-size: 22px;
  color: #c8c8c8;
  white-space: nowrap;
}

.toggle {
  width: 76px;
  height: 28px;
  border-radius: 14px;
  background: #1c1c1c;
  display: flex;
  align-items: center;
  gap: 6px;
}

.toggle b {
  width: 24px;
  height: 24px;
  border-radius: 50%;
  background: #f2f2f2;
}

.toggle em {
  font-style: normal;
  font-size: 15px;
  color: #b0b0b0;
}

.doc-title {
  display: flex;
  align-items: center;
  font-size: 26px;
  white-space: nowrap;
}

.doc-p {
  fill: #fff;
  font-size: 12px;
  font-weight: 700;
  text-anchor: middle;
}

.doc-name {
  margin-left: 9px;
  color: #e8e8e8;
}

.doc-state {
  margin-left: 8px;
  color: #8c8c8c;
}

.doc-state + svg {
  margin-left: 6px;
}

.title-right {
  margin-left: auto;
  display: flex;
  align-items: center;
  padding-right: 24px;
  gap: 12px;
}

.title-right svg:first-child {
  margin-right: 22px;
}

.ribbon {
  height: 209px;
  flex: none;
  box-sizing: border-box;
  background: #242424;
  border-bottom: 3px solid #0a0a0a;
}

.tabs {
  height: 66px;
  display: flex;
  align-items: center;
  gap: 46px;
  padding: 0 21px 0 22px;
}

.tab {
  position: relative;
  font-size: 26px;
  font-weight: 500;
  color: #d2d2d2;
  margin-top: -8px;
  white-space: nowrap;
}

.tab.active::after {
  content: "";
  position: absolute;
  left: -13px;
  right: -13px;
  bottom: -6px;
  height: 6px;
  border-radius: 3px;
  background: #d8d8d8;
}

.tab-actions {
  margin-left: auto;
  margin-top: -2px;
  display: flex;
  gap: 21px;
}

.pill {
  width: 112px;
  height: 48px;
  padding: 0;
  border: 0;
  border-radius: 7px;
  background: #4b4b4b;
  color: #dedede;
  font-family: inherit;
  font-size: 25px;
  font-weight: 500;
  display: flex;
  align-items: center;
  justify-content: center;
  gap: 8px;
}

.tools {
  display: flex;
  align-items: flex-start;
  padding-top: 3px;
}

.vsep {
  width: 2px;
  height: 125px;
  flex: none;
  background: #3e3e3e;
}

.preview {
  width: 113px;
  flex: none;
  box-sizing: border-box;
  padding: 15px 0 0 28px;
  font-size: 21px;
  display: flex;
  flex-direction: column;
  gap: 7px;
}

.preview span {
  line-height: 26px;
  padding-left: 7px;
}

.gallery {
  position: relative;
  width: 1543px;
  height: 116px;
  flex: none;
  box-sizing: border-box;
  margin: 2px 0 0 19px;
  padding: 4px 0 0 34px;
  display: flex;
  background: #333;
  border-radius: 8px;
  border-bottom: 2px solid #3e3e3e;
}

.defs {
  position: absolute;
}

.cells {
  display: grid;
  grid-template-columns: repeat(8, 184px);
}

.cell {
  height: 108px;
  box-sizing: border-box;
  display: flex;
  flex-direction: column;
  align-items: center;
  font-size: 19px;
  color: #c8c8c8;
}

.cell.selected {
  width: 182px;
  margin-left: 3px;
  padding-right: 4px;
  background: #5a5a5a;
  box-shadow: inset 0 0 0 2px #dedede;
  border-radius: 9px;
  color: #eee;
}

.thumb {
  flex: none;
}

.cell-label {
  line-height: 30px;
}

.more {
  margin: 52px 0 0 16px;
}

.effects {
  width: 110px;
  flex: none;
  margin-left: 11px;
  padding-top: 6px;
  font-size: 21px;
  color: #e4e4e4;
}

.effects-top {
  display: flex;
  align-items: center;
  gap: 13px;
  margin-bottom: 6px;
}

.effects span {
  white-space: nowrap;
  margin-left: -2px;
  line-height: 28px;
}

.timing {
  width: 348px;
  flex: none;
  box-sizing: border-box;
  padding: 8px 0 0 27px;
}

.form-row {
  height: 48px;
  margin-bottom: 16px;
  display: flex;
  align-items: center;
}

.form-label {
  margin-left: 13px;
  font-size: 22px;
  color: #dcdcdc;
  white-space: nowrap;
}

.spin {
  height: 48px;
  box-sizing: border-box;
  display: flex;
  align-items: center;
  justify-content: space-between;
  padding: 0 7px 0 15px;
  border-radius: 8px;
  font-size: 23px;
  color: #e4e4e4;
  background: #2a2a2a;
  box-shadow: inset 0 0 0 1px #363636;
}

.duration {
  width: 154px;
  margin-left: 15px;
  padding: 0 12px 0 12px;
}

.sound {
  width: 200px;
  margin-left: 16px;
  background: #525252;
  box-shadow: none;
  padding: 0 7px 0 7px;
  font-size: 22px;
}

.advance {
  width: 380px;
  flex: none;
  box-sizing: border-box;
  padding: 8px 0 0 27px;
}

.check {
  width: 26px;
  height: 30px;
  flex: none;
  border-radius: 6px;
  background: #333;
  box-shadow: inset 0 0 0 1px #1a1a1a;
}

.check svg {
  display: block;
}

.check-label {
  margin-left: 14px;
  font-size: 20px;
  color: #dcdcdc;
  white-space: nowrap;
}

.check-label.wide {
  width: 129px;
}

.auto {
  width: 152px;
  margin-left: 14px;
}

.apply {
  flex: none;
  width: 106px;
  padding: 12px 0 0 20px;
  text-align: center;
  font-size: 21px;
  line-height: 24px;
  color: #e4e4e4;
}

.apply svg {
  display: block;
  margin: 0 0 8px 4px;
}

.apply span {
  display: block;
  width: 64px;
  white-space: nowrap;
}

.body {
  flex: 1;
  min-height: 0;
  display: flex;
}

.pane {
  width: 218px;
  flex: none;
  box-sizing: border-box;
  padding-top: 12px;
  background: #2a2b2d;
  border-right: 3px solid #0a0a0a;
  box-shadow: inset 2px 0 0 #454545;
}

.pane-row {
  height: 94px;
  display: flex;
  align-items: center;
}

.pane-num {
  width: 63px;
  flex: none;
  align-self: flex-start;
  padding: 12px 0 0 20px;
  box-sizing: border-box;
  display: flex;
  flex-direction: column;
}

.pane-num b {
  font-size: 26px;
  line-height: 30px;
  font-family: "Liberation Sans", sans-serif;
  padding-left: 2px;
}

.pane-num svg {
  margin-top: 15px;
}

.mini {
  width: 110px;
  height: 66px;
  box-sizing: border-box;
  border: 2px solid #c4c4c4;
  padding: 1px 1px 3px 3px;
  background: #232323;
}

.mini.current {
  width: 118px;
  height: 74px;
  margin-left: -3px;
  border: 6px solid #b83124;
  padding: 2px;
}

.mini-slide {
  display: block;
  width: 100%;
  height: 100%;
}

.mini-slide text {
  font-family: "Noto Sans CJK JP", sans-serif;
  text-anchor: middle;
}

.mini-slide .m1 { font-size: 9px; fill: #333; }
.mini-slide .m2 { font-size: 11.5px; fill: #111; font-weight: 500; }
.mini-slide .m3 { font-size: 3.5px; fill: #222; font-weight: 700; }
.mini-slide .m4 { font-size: 3.3px; fill: #444; }
.mini-slide .m5 { font-size: 3px; fill: #ddd; text-anchor: start; }
.mini-slide .m6 { font-size: 3.2px; fill: #ddd; }
.mini-slide .m7 { font-size: 5px; fill: #444; text-anchor: start; }

.editor {
  flex: 1;
  min-width: 0;
  display: flex;
  flex-direction: column;
}

.canvas {
  flex: 1;
  min-height: 0;
  display: flex;
  align-items: center;
  justify-content: center;
  background: #232323;
}

.slide {
  position: relative;
  width: 2109px;
  height: 1189px;
  flex: none;
  background: #fff;
  box-shadow: 0 0 30px rgba(0, 0, 0, 0.25);
  color: #000;
  font-family: "Noto Sans CJK JP", sans-serif;
  display: flex;
  flex-direction: column;
  align-items: center;
  box-sizing: border-box;
  padding-top: 180px;
}

.slide h1,
.slide h2,
.slide p {
  margin: 0;
  font-weight: 400;
  white-space: nowrap;
}

.slide .line-a {
  font-size: 163px;
  line-height: 180px;
  margin-right: 80px;
}

.slide .line-b {
  font-size: 220px;
  line-height: 240px;
  margin: 45px 60px 0 0;
}

.slide .line-c {
  font-size: 65px;
  line-height: 80px;
  margin: 90px 34px 0 0;
  font-weight: 700;
}

.slide .line-d {
  font-size: 55px;
  line-height: 80px;
  margin: 98px 54px 0 0;
}

.line-d small {
  font-size: 48px;
  margin-left: 27px;
}

.tick {
  position: absolute;
  left: 198px;
  top: 1065px;
  width: 1px;
  height: 7px;
  background: #444;
}

.cursor {
  position: absolute;
  left: 1479px;
  top: 183px;
}

.notes {
  height: 156px;
  flex: none;
  box-sizing: border-box;
  border-top: 3px solid #0a0a0a;
  background: #212121;
  padding: 16px 0 0 22px;
  font-family: "Noto Sans CJK SC", serif;
  font-size: 39px;
  line-height: 48px;
  color: #e8e8e8;
}

.statusbar {
  height: 44px;
  flex: none;
  box-sizing: border-box;
  display: flex;
  align-items: center;
  border-top: 1px solid #0e0e0e;
  background: linear-gradient(180deg, #414141, #343434);
  font-size: 24px;
  color: #e4e4e4;
  white-space: nowrap;
}

.slide-count {
  margin-left: 49px;
}

.lang {
  margin-left: 43px;
}

.status-tools {
  margin-left: auto;
  height: 100%;
  display: grid;
  grid-template-columns: 36px 89px 35px 69px 73px 73px 73px 45px 212px 50px 98px 26px;
  justify-items: start;
  align-items: center;
  padding-right: 56px;
}

.view-btn {
  width: 73px;
  height: 44px;
  display: flex;
  align-items: center;
  justify-content: center;
}

.view-btn.active {
  background: #555;
}

.zoom-minus {
  width: 16px;
  height: 5px;
  margin-left: 13px;
  background: #f0f0f0;
}

.slider {
  position: relative;
  width: 196px;
  height: 9px;
  border-radius: 5px;
  background: #777;
}

.slider i {
  position: absolute;
  left: 90px;
  top: -7px;
  width: 22px;
  height: 22px;
  border-radius: 50%;
  background: #c8c8c8;
}

.dock {
  width: 90px;
  height: 1647px;
  flex: none;
  box-sizing: border-box;
  margin: 54px 0 0 4px;
  padding: 4px 0 0 12px;
  border: 1px solid #34445e;
  border-right: 0;
  border-radius: 14px 0 0 14px;
  background: linear-gradient(180deg, #17233f, #1f2e4a);
}

.dock-item {
  position: relative;
  width: 60px;
  height: 71.5px;
  display: flex;
  align-items: center;
  justify-content: center;
}

.dock-item svg {
  flex: none;
}

.dock-item.running::after {
  content: "";
  position: absolute;
  left: 66px;
  top: 32px;
  width: 7px;
  height: 6px;
  border-radius: 50%;
  background: #a6acb8;
}

.dock-sep {
  width: 66px;
  height: 1px;
  background: #4d5c76;
}

.sep-a {
  margin: 17px 0 13px;
}

.sep-b {
  margin: 18px 0 10px;
}

.cal-m {
  font-size: 10px;
  fill: #fff;
  text-anchor: middle;
  font-family: "Noto Sans CJK JP", sans-serif;
}

.cal-d {
  font-size: 28px;
  fill: #222;
  text-anchor: middle;
  font-family: "Liberation Sans", sans-serif;
}

.tv {
  font-size: 24px;
  font-weight: 700;
  fill: #fff;
  font-family: "Liberation Sans", sans-serif;
}

.ppt {
  font-size: 24px;
  font-weight: 700;
  fill: #fff;
  text-anchor: middle;
  font-family: "Liberation Sans", sans-serif;
}

.xlsx {
  font-size: 9px;
  fill: #555;
  text-anchor: middle;
  font-family: "Liberation Sans", sans-serif;
}
</style>
